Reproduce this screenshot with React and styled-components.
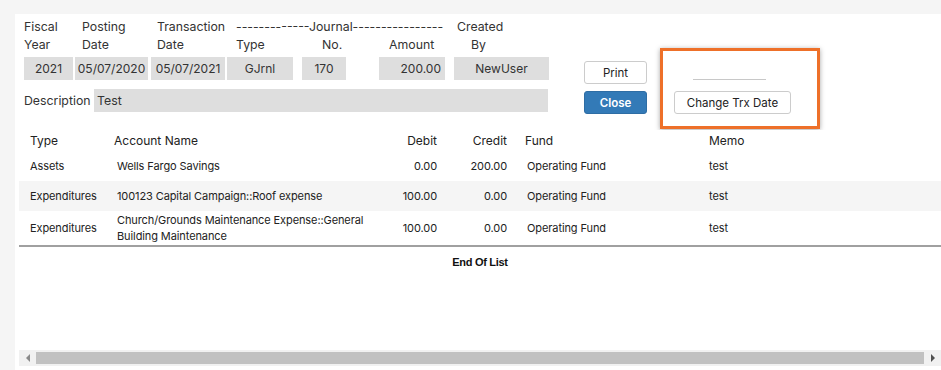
import React from 'react'
import styled, { createGlobalStyle } from 'styled-components'

const GlobalStyle = createGlobalStyle`
  html, body {
    margin: 0;
    padding: 0;
    background: #f5f5f5;
    font-family: Inter, "Noto Sans", sans-serif;
    color: #333;
  }
`

const Page = styled.div`
  width: 941px;
  height: 370px;
  padding: 14px 0 0 15px;
  box-sizing: border-box;
  overflow: hidden;
`

const Panel = styled.div`
  background: #fff;
  height: 356px;
  display: flex;
  flex-direction: column;
  padding: 4px 0 4px 0;
  box-sizing: border-box;
`

const HeaderArea = styled.div`
  display: flex;
  align-items: flex-start;
  padding-left: 9px;
`

const LeftBlock = styled.div`
  display: flex;
  flex-direction: column;
  gap: 9px;
`

const InfoGrid = styled.div`
  display: grid;
  grid-template-columns: 51px 76px 76px 75px 77px 75px 95px;
  grid-template-rows: 18px 18px auto;
`

const Label = styled.div`
  font-size: 12.3px;
  line-height: 18px;
  white-space: nowrap;
  padding-left: ${(p) => p.$pad || 0}px;
  grid-column: ${(p) => p.$span || 'auto'};
`

const Field = styled.div`
  margin-top: 3px;
  width: ${(p) => p.$w}px;
  height: 23px;
  background: #dedede;
  font-size: 12px;
  line-height: 23px;
  text-align: ${(p) => p.$align || 'center'};
  padding: 0 ${(p) => (p.$align === 'right' ? 4 : 0)}px 0 0;
  box-sizing: border-box;
  white-space: nowrap;
`

const DescRow = styled.div`
  display: flex;
  align-items: center;
`

const DescLabel = styled.div`
  width: 70px;
  font-size: 12.3px;
`

const DescField = styled.div`
  width: 454px;
  height: 23px;
  background: #dedede;
  font-size: 12.3px;
  line-height: 23px;
  padding-left: 3px;
  box-sizing: border-box;
`

const ButtonCol = styled.div`
  display: flex;
  flex-direction: column;
  gap: 7px;
  margin: 43px 0 0 35px;
`

const Button = styled.button`
  width: ${(p) => p.$w || 63}px;
  height: 23px;
  border-radius: 3px;
  font-family: Inter, "Noto Sans", sans-serif;
  font-size: 11.5px;
  padding: 0;
  cursor: pointer;
  border: 1px solid ${(p) => (p.$primary ? '#2e6da4' : '#ccc')};
  background: ${(p) => (p.$primary ? '#337ab7' : '#fff')};
  color: ${(p) => (p.$primary ? '#fff' : '#222')};
  font-weight: ${(p) => (p.$primary ? 600 : 400)};
`

const Highlight = styled.div`
  margin: 30px 0 0 13px;
  width: 160px;
  height: 81px;
  box-sizing: border-box;
  border: 3px solid #ee7029;
  box-shadow: 0 1px 5px rgba(0, 0, 0, 0.35);
  display: flex;
  flex-direction: column;
  align-items: flex-start;
  padding-left: 11px;
`

const DateLine = styled.div`
  width: 73px;
  height: 1px;
  background: #c8c8c8;
  margin: 28px 0 11px 19px;
`

const TableWrap = styled.div`
  margin: 1px 0 0 4px;
`

const Row = styled.div`
  display: grid;
  grid-template-columns: 91px 270px 61px 70px 189px 1fr;
  align-items: center;
  min-height: ${(p) => p.$h || 30}px;
  background: ${(p) => (p.$shade ? '#f5f5f5' : '#fff')};
  font-size: ${(p) => (p.$head ? 12 : 11)}px;
  letter-spacing: ${(p) => (p.$head ? 0 : -0.1)}px;
  line-height: 16px;
  color: #222;
  border-bottom: ${(p) => (p.$last ? '2px solid #a0a0a0' : 'none')};
`

const Cell = styled.div`
  padding-left: ${(p) => p.$pl || 0}px;
  padding-right: ${(p) => p.$pr || 0}px;
  text-align: ${(p) => (p.$right ? 'right' : 'left')};
  white-space: nowrap;
`

const EndOfList = styled.div`
  text-align: center;
  font-family: "Liberation Sans", Arial, sans-serif;
  font-weight: 700;
  font-size: 11px;
  letter-spacing: -0.3px;
  color: #111;
  padding-top: 9px;
`

const Scrollbar = styled.div`
  margin: auto 0 0 4px;
  height: 16px;
  background: #f1f1f1;
  display: flex;
  align-items: center;
`

const ScrollArrow = styled.div`
  width: 17px;
  height: 16px;
  display: flex;
  align-items: center;
  justify-content: center;
  &::before {
    content: '';
    border-top: 4px solid transparent;
    border-bottom: 4px solid transparent;
    ${(p) => (p.$dir === 'left' ? 'border-right: 4px solid #8a8a8a;' : 'border-left: 4px solid #505050;')}
  }
`

const Thumb = styled.div`
  flex: 1;
  height: 12px;
  background: #c1c1c1;
`

const columns = [
  { l2: 'Year', p2: 0, value: '2021', w: 49 },
  { l2: 'Date', p2: 7, value: '05/07/2020', w: 73 },
  { l2: 'Date', p2: 6, value: '05/07/2021', w: 74 },
  { l2: 'Type', p2: 9, value: 'GJrnl', w: 66 },
  { l2: 'No.', p2: 20, value: '170', w: 44 },
  { l2: 'Amount', p2: 10, value: '200.00', w: 66, align: 'right' },
  { l2: 'By', p2: 17, value: 'NewUser', w: 95 },
]

const lines = [
  { type: 'Assets', account: 'Wells Fargo Savings', debit: '0.00', credit: '200.00', fund: 'Operating Fund', memo: 'test' },
  { type: 'Expenditures', account: '100123 Capital Campaign::Roof expense', debit: '100.00', credit: '0.00', fund: 'Operating Fund', memo: 'test', shade: true },
  { type: 'Expenditures', account: <>Church/Grounds Maintenance Expense::General<br />Building Maintenance</>, debit: '100.00', credit: '0.00', fund: 'Operating Fund', memo: 'test', h: 34, last: true },
]

export default function App() {
  return (
    <>
      <GlobalStyle />
      <Page>
        <Panel>
          <HeaderArea>
            <LeftBlock>
              <InfoGrid>
                <Label $pad={0}>Fiscal</Label>
                <Label $pad={7}>Posting</Label>
                <Label $pad={6}>Transaction</Label>
                <Label $pad={9} $span="4 / 7">-------------Journal----------------</Label>
                <Label $pad={3}>Created</Label>
                {columns.map((c, i) => (
                  <Label key={i} $pad={c.p2}>{c.l2}</Label>
                ))}
                {columns.map((c) => (
                  <Field key={c.value} $w={c.w} $align={c.align}>{c.value}</Field>
                ))}
              </InfoGrid>
              <DescRow>
                <DescLabel>Description</DescLabel>
                <DescField>Test</DescField>
              </DescRow>
            </LeftBlock>
            <ButtonCol>
              <Button>Print</Button>
              <Button $primary>Close</Button>
            </ButtonCol>
            <Highlight>
              <DateLine />
              <Button $w={117}>Change Trx Date</Button>
            </Highlight>
          </HeaderArea>

          <TableWrap>
            <Row $head $h={21}>
              <Cell $pl={11}>Type</Cell>
              <Cell $pl={4}>Account Name</Cell>
              <Cell $right $pr={4}>Debit</Cell>
              <Cell $right $pr={4}>Credit</Cell>
              <Cell $pl={14}>Fund</Cell>
              <Cell $pl={9}>Memo</Cell>
            </Row>
            {lines.map((r, i) => (
              <Row key={i} $shade={r.shade} $h={r.h} $last={r.last}>
                <Cell $pl={11}>{r.type}</Cell>
                <Cell $pl={7}>{r.account}</Cell>
                <Cell $right $pr={4}>{r.debit}</Cell>
                <Cell $right $pr={4}>{r.credit}</Cell>
                <Cell $pl={16}>{r.fund}</Cell>
                <Cell $pl={9}>{r.memo}</Cell>
              </Row>
            ))}
            <EndOfList>End Of List</EndOfList>
          </TableWrap>

          <Scrollbar>
            <ScrollArrow $dir="left" />
            <Thumb />
            <ScrollArrow $dir="right" />
          </Scrollbar>
        </Panel>
      </Page>
    </>
  )
}
